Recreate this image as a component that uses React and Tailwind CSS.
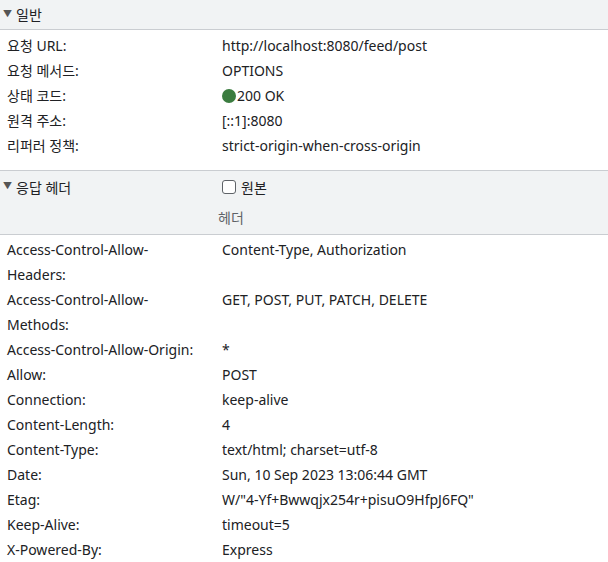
import { useState } from 'react';

const general = [
  ['요청 URL:', 'http://localhost:8080/feed/post'],
  ['요청 메서드:', 'OPTIONS'],
  ['상태 코드:', 'status'],
  ['원격 주소:', '[::1]:8080'],
  ['리퍼러 정책:', 'strict-origin-when-cross-origin'],
];

const headers = [
  ['Access-Control-Allow-Headers:', 'Content-Type, Authorization'],
  ['Access-Control-Allow-Methods:', 'GET, POST, PUT, PATCH, DELETE'],
  ['Access-Control-Allow-Origin:', '*'],
  ['Allow:', 'POST'],
  ['Connection:', 'keep-alive'],
  ['Content-Length:', '4'],
  ['Content-Type:', 'text/html; charset=utf-8'],
  ['Date:', 'Sun, 10 Sep 2023 13:06:44 GMT'],
  ['Etag:', 'W/"4-Yf+Bwwqjx254r+pisuO9HfpJ6FQ"'],
  ['Keep-Alive:', 'timeout=5'],
  ['X-Powered-By:', 'Express'],
];

function Caret() {
  return <span className="text-[9px] text-[#555] mr-1 relative -top-px">▼</span>;
}

function Row({ name, value }) {
  return (
    <div className="flex leading-[25px]">
      <div className="w-[215px] shrink-0 pr-[18px] break-words">{name}</div>
      <div className="flex-1 min-w-0 break-all">
        {value === 'status' ? (
          <span className="flex items-center">
            <span className="w-[14px] h-[14px] rounded-full bg-[#3b7c3f] mr-px" />
            200 OK
          </span>
        ) : (
          value
        )}
      </div>
    </div>
  );
}

export default function App() {
  const [raw, setRaw] = useState(false);
  return (
    <div className="w-[608px] h-[562px] overflow-hidden bg-white text-[14px] text-[#202124] font-['Noto_Sans','Noto_Sans_CJK_KR',sans-serif]">
      {/* 일반 */}
      <div className="h-[30px] bg-[#f1f3f4] border-b border-[#cacdd1] flex items-center pl-[3px]">
        <Caret />
        <span>일반</span>
      </div>
      <div className="pt-[3px] pb-[12px] pl-[7px]">
        {general.map(([n, v]) => (
          <Row key={n} name={n} value={v} />
        ))}
      </div>

      {/* 응답 헤더 */}
      <div className="bg-[#f1f3f4] border-y border-[#cacdd1] h-[65px]">
        <div className="flex h-[32px] items-center">
          <div className="w-[222px] pl-[3px] flex items-center">
            <Caret />
            <span>응답 헤더</span>
          </div>
          <label className="flex items-center gap-[5px]">
            <input
              type="checkbox"
              checked={raw}
              onChange={(e) => setRaw(e.target.checked)}
              className="w-[14px] h-[14px] appearance-none rounded-[3px] border border-[#5f6368] bg-white"
            />
            <span>원본</span>
          </label>
        </div>
        <div className="pl-[218px] text-[#5f6368] leading-[29px]">헤더</div>
      </div>
      <div className="pt-[2px] pl-[7px]">
        {headers.map(([n, v]) => (
          <Row key={n} name={n} value={v} />
        ))}
      </div>
    </div>
  );
}
